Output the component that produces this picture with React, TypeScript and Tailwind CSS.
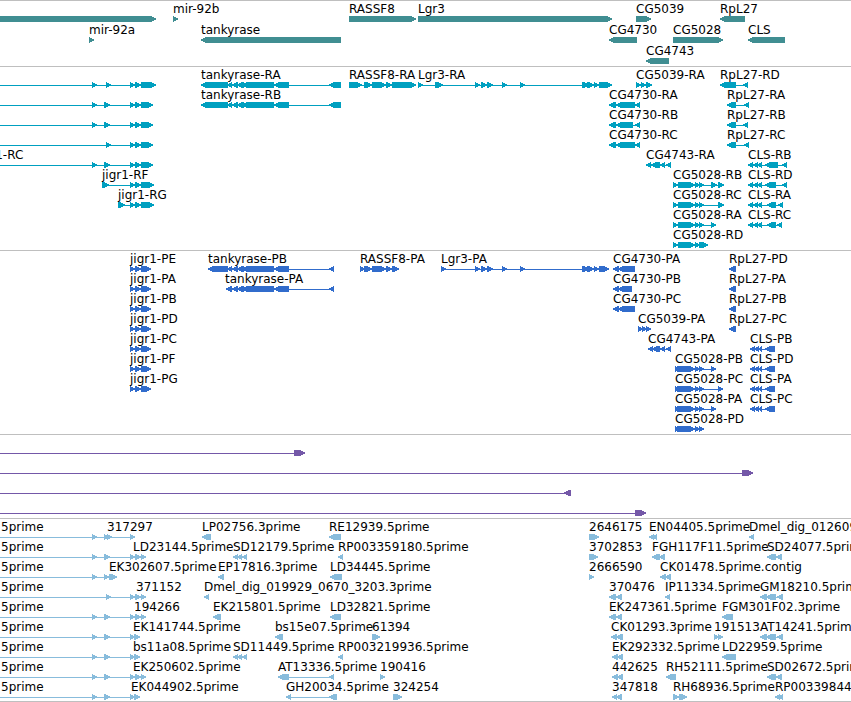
type Strand = "+" | "-";

interface Feature {
  /** Left edge of the label. */
  x: number;
  label?: string;
  strand: Strand;
  /** Blocks as [start, end] pairs, joined by a thin intron line. */
  blocks: number[][];
}

interface TrackData {
  name: string;
  fill: string;
  rowClass: string;
  padClass: string;
  rows: Feature[][];
}

const BAR_TOP = 15;
const BAR_HEIGHT = 6;
const INTRON_Y = 18;
const TIP = 5;

/** Reads "92-97 104-110" into pairs of numbers. */
function parse(spec: string): number[][] {
  return spec.split(" ").map((part) => part.split("-").map(Number));
}

function feat(x: number, label: string, strand: Strand, spec: string): Feature {
  return { x, label, strand, blocks: parse(spec) };
}

/** A feature that begins beyond the left edge of the view. */
function fromLeft(label: string, x: number, strand: Strand, spec: string): Feature {
  return { x, label, strand, blocks: [[0, 0], ...parse(spec)] };
}

const GENES: Feature[][] = [
  [
    feat(0, "", "+", "0-156"),
    feat(173, "mir-92b", "+", "173-178"),
    feat(349, "RASSF8", "+", "349-416"),
    feat(418, "Lgr3", "+", "418-612"),
    feat(636, "CG5039", "+", "636-651"),
    feat(720, "RpL27", "-", "720-745"),
  ],
  [
    feat(89, "mir-92a", "+", "89-94"),
    feat(201, "tankyrase", "-", "201-341"),
    feat(609, "CG4730", "-", "609-637"),
    feat(673, "CG5028", "+", "673-723"),
    feat(748, "CLS", "-", "748-785"),
  ],
  [feat(646, "CG4743", "-", "646-669")],
];

const TANK_R = "201-228 227-232 232-238 237-244 242-274 274-289 329-341";
const JIGR_R = "92-97 104-110 130-135 135-141 141-153";

const TRANSCRIPTS: Feature[][] = [
  [
    fromLeft("", 0, "+", "92-97 106-111 130-135 135-141 141-156"),
    feat(201, "tankyrase-RA", "-", TANK_R),
    feat(349, "RASSF8-RA", "+", "349-362 364-372 372-386 386-392 392-416"),
    feat(418, "Lgr3-RA", "+", "418-423 435-443 475-480 481-487 487-493 502-507 520-525 582-589 587-594 594-599 599-612"),
    feat(636, "CG5039-RA", "+", "636-641 641-646 646-652"),
    feat(720, "RpL27-RD", "-", "720-736 743-748"),
  ],
  [
    fromLeft("", 0, "+", JIGR_R),
    feat(201, "tankyrase-RB", "-", TANK_R),
    feat(609, "CG4730-RA", "-", "609-616 616-635 635-640"),
    feat(727, "RpL27-RA", "-", "727-736 744-749"),
  ],
  [
    fromLeft("", 0, "+", JIGR_R),
    feat(609, "CG4730-RB", "-", "609-616 616-633 635-640"),
    feat(727, "RpL27-RB", "-", "727-736 743-748"),
  ],
  [
    fromLeft("", 0, "+", "106-111 130-135 135-141 141-153"),
    feat(609, "CG4730-RC", "-", "609-616 616-635 635-640"),
    feat(727, "RpL27-RC", "-", "727-736 744-749"),
  ],
  [
    fromLeft("jigr1-RC", -24, "+", JIGR_R),
    feat(646, "CG4743-RA", "-", "646-651 651-660 660-665 666-671"),
    feat(748, "CLS-RB", "-", "748-753 753-758 757-762 765-778 782-787"),
  ],
  [
    feat(102, "jigr1-RF", "+", "102-109 130-135 135-141 141-154"),
    feat(673, "CG5028-RB", "+", "673-678 678-695 695-700 699-704 711-717 718-724"),
    feat(748, "CLS-RD", "-", "748-753 753-758 757-762 765-776 782-787"),
  ],
  [
    feat(118, "jigr1-RG", "+", "118-125 130-135 135-141 141-154"),
    feat(673, "CG5028-RC", "+", "673-678 678-695 695-700 699-704 718-724"),
    feat(748, "CLS-RA", "-", "748-753 753-758 757-762 767-776 778-783"),
  ],
  [
    feat(673, "CG5028-RA", "+", "673-678 678-695 695-700 699-704 711-716"),
    feat(748, "CLS-RC", "-", "748-753 753-758 757-762 767-776 777-782"),
  ],
  [feat(673, "CG5028-RD", "+", "673-678 678-695 695-700 699-708")],
];

const JIGR_P = "130-135 135-141 141-151";
const CLS_P = "750-755 754-759 758-762 765-775";

const PROTEINS: Feature[][] = [
  [
    feat(130, "jigr1-PE", "+", JIGR_P),
    feat(208, "tankyrase-PB", "-", "208-228 227-232 232-238 237-244 242-274 274-289 329-334"),
    feat(360, "RASSF8-PA", "+", "360-365 364-372 372-386 386-392 392-399"),
    feat(441, "Lgr3-PA", "+", "441-446 475-480 481-487 487-493 502-507 520-525 582-589 587-594 594-599 599-609"),
    feat(613, "CG4730-PA", "-", "613-619 618-635"),
    feat(729, "RpL27-PD", "-", "729-736"),
  ],
  [
    feat(130, "jigr1-PA", "+", JIGR_P),
    feat(225, "tankyrase-PA", "-", "226-232 232-238 237-244 242-274 274-289 329-334"),
    feat(613, "CG4730-PB", "-", "613-619 618-632"),
    feat(729, "RpL27-PA", "-", "729-736"),
  ],
  [
    feat(130, "jigr1-PB", "+", JIGR_P),
    feat(613, "CG4730-PC", "-", "613-619 618-635"),
    feat(729, "RpL27-PB", "-", "729-736"),
  ],
  [
    feat(130, "jigr1-PD", "+", JIGR_P),
    feat(638, "CG5039-PA", "+", "638-643 642-647 646-651"),
    feat(729, "RpL27-PC", "-", "729-736"),
  ],
  [
    feat(130, "jigr1-PC", "+", JIGR_P),
    feat(648, "CG4743-PA", "-", "648-653 652-660 660-665 666-671"),
    feat(750, "CLS-PB", "-", CLS_P),
  ],
  [
    feat(130, "jigr1-PF", "+", JIGR_P),
    feat(675, "CG5028-PB", "+", "675-679 677-695 695-700 699-704 711-716"),
    feat(750, "CLS-PD", "-", CLS_P),
  ],
  [
    feat(130, "jigr1-PG", "+", JIGR_P),
    feat(675, "CG5028-PC", "+", "675-679 677-695 695-700 699-704 718-723"),
    feat(750, "CLS-PA", "-", CLS_P),
  ],
  [
    feat(675, "CG5028-PA", "+", "675-679 677-695 695-700 699-704 711-716"),
    feat(750, "CLS-PC", "-", CLS_P),
  ],
  [feat(675, "CG5028-PD", "+", "675-679 677-695 695-700 699-704")],
];

const SPANS: Feature[][] = [
  [fromLeft("", 0, "+", "294-305")],
  [fromLeft("", 0, "+", "742-753")],
  [fromLeft("", 0, "-", "564-571")],
  [fromLeft("", 0, "+", "635-646")],
];

const EST_LONG = "92-97 104-110 130-135 135-141 141-146";
const EST_SHORT = "92-97 104-110 130-135 134-140";

const ESTS: Feature[][] = [
  [
    fromLeft("5prime", 1, "+", "92-97 104-109 107-112 130-135"),
    feat(107, "317297", "+", "130-135"),
    feat(202, "LP02756.3prime", "-", "202-211"),
    feat(329, "RE12939.5prime", "-", "329-341"),
    feat(589, "2646175", "+", "589-599"),
    feat(649, "EN04405.5prime", "-", "649-654 652-657"),
    feat(749, "Dmel_dig_012609", "-", "749-754"),
  ],
  [
    fromLeft("5prime", 1, "+", EST_LONG),
    feat(133, "LD23144.5prime", "+", "141-146"),
    feat(233, "SD12179.5prime", "-", "233-238 237-242 242-247"),
    feat(338, "RP003359180.5prime", "-", "338-343"),
    feat(589, "3702853", "+", "589-598"),
    feat(652, "FGH117F11.5prime", "-", "652-660 659-665"),
    feat(767, "SD24077.5prime", "-", "767-776 776-782"),
  ],
  [
    fromLeft("5prime", 1, "+", "92-97 104-109 109-117"),
    feat(109, "EK302607.5prime", "+", "109-117"),
    feat(218, "EP17816.3prime", "-", "218-224"),
    feat(330, "LD34445.5prime", "-", "330-342"),
    feat(589, "2666590", "+", "589-594"),
    feat(660, "CK01478.5prime.contig", "-", "660-666 665-671"),
  ],
  [
    fromLeft("5prime", 1, "+", "106-111 130-135 135-141 141-146"),
    feat(136, "371152", "+", "141-146"),
    feat(204, "Dmel_dig_019929_0670_3203.3prime", "-", "204-209"),
    feat(609, "370476", "-", "609-616 616-622"),
    feat(665, "IP11334.5prime", "-", "665-670"),
    feat(760, "GM18210.5prime", "-", "760-767 766-776 777-783"),
  ],
  [
    fromLeft("5prime", 1, "+", EST_LONG),
    feat(134, "194266", "+", "141-146"),
    feat(213, "EK215801.5prime", "-", "213-221"),
    feat(330, "LD32821.5prime", "-", "330-341"),
    feat(609, "EK247361.5prime", "-", "609-616 616-622"),
    feat(722, "FGM301F02.3prime", "-", "722-733"),
  ],
  [
    fromLeft("5prime", 1, "+", EST_SHORT),
    feat(133, "EK141744.5prime", "+", "134-140"),
    feat(275, "bs15e07.5prime", "-", "275-283"),
    feat(372, "61394", "+", "372-380"),
    feat(611, "CK01293.3prime", "-", "611-617 616-623"),
    feat(714, "191513", "+", "714-719 718-723"),
    feat(760, "AT14241.5prime", "-", "760-767 766-776 777-783"),
  ],
  [
    fromLeft("5prime", 1, "+", EST_SHORT),
    feat(133, "bs11a08.5prime", "+", "134-140"),
    feat(233, "SD11449.5prime", "-", "233-238 237-242 242-247"),
    feat(338, "RP003219936.5prime", "-", "338-343"),
    feat(612, "EK292332.5prime", "-", "612-618 617-623"),
    feat(722, "LD22959.5prime", "-", "722-736"),
  ],
  [
    fromLeft("5prime", 1, "+", EST_LONG),
    feat(133, "EK250602.5prime", "+", "141-146"),
    feat(278, "AT13336.5prime", "-", "278-289 329-334"),
    feat(380, "190416", "+", "380-385"),
    feat(612, "442625", "-", "612-618 617-623"),
    feat(666, "RH52111.5prime", "-", "666-676"),
    feat(767, "SD02672.5prime", "-", "767-776 776-782"),
  ],
  [
    fromLeft("5prime", 1, "+", EST_SHORT),
    feat(131, "EK044902.5prime", "+", "134-140"),
    feat(286, "GH20034.5prime", "-", "286-291 329-337"),
    feat(393, "324254", "+", "393-402"),
    feat(612, "347818", "-", "612-617 616-622"),
    feat(673, "RH68936.5prime", "+", "673-679 679-687"),
    feat(775, "RP003398440.5prime", "-", "775-780 778-783"),
  ],
];

const TRACKS: TrackData[] = [
  { name: "Genes", fill: "fill-[#408e92]", rowClass: "h-[21px]", padClass: "pb-[2px]", rows: GENES },
  { name: "Transcripts", fill: "fill-[#00a0c0]", rowClass: "h-5", padClass: "pb-[3px]", rows: TRANSCRIPTS },
  { name: "Proteins", fill: "fill-[#316ccc]", rowClass: "h-5", padClass: "pb-[3px]", rows: PROTEINS },
  { name: "Spans", fill: "fill-[#7458a8]", rowClass: "h-5", padClass: "pb-[3px]", rows: SPANS },
  { name: "ESTs", fill: "fill-[#88bcdc]", rowClass: "h-5", padClass: "pb-[2px]", rows: ESTS },
];

/** How far each pixel row of the tip stops short of its point, top to bottom. */
const TIP_STEPS = [4, 2, 0, 0, 2, 4];

/** Stepped outline of one block, pointed at the end that its strand runs to. */
function blockPoints(start: number, end: number, strand: Strand): string {
  const reach = Math.min(TIP, end - start) - 1;
  const point = strand === "+" ? end : start;
  const back = strand === "+" ? start : end;
  const inward = strand === "+" ? -1 : 1;
  const edge = TIP_STEPS.flatMap((step, i) => {
    const x = point + inward * Math.min(step, reach);
    return [`${x},${BAR_TOP + i}`, `${x},${BAR_TOP + i + 1}`];
  });
  return [`${back},${BAR_TOP}`, ...edge, `${back},${BAR_TOP + BAR_HEIGHT}`].join(" ");
}

function Glyph({ feature }: { feature: Feature }) {
  const { blocks, strand } = feature;
  const first = blocks[0][0];
  const last = blocks[blocks.length - 1][1];
  return (
    <g>
      {blocks.length > 1 && <rect x={first} y={INTRON_Y} width={last - first - 1} height={1} />}
      {blocks
        .filter(([start, end]) => end > start)
        .map(([start, end]) => (
          <polygon key={start} points={blockPoints(start, end, strand)} />
        ))}
    </g>
  );
}

function Row({ features, fill, rowClass }: { features: Feature[]; fill: string; rowClass: string }) {
  return (
    <div className={`relative ${rowClass}`}>
      <svg
        className={`block w-full overflow-visible ${rowClass} ${fill}`}
        shapeRendering="crispEdges"
        aria-hidden="true"
      >
        {features.map((feature, i) => (
          <Glyph key={i} feature={feature} />
        ))}
      </svg>
      {features
        .filter((feature) => feature.label)
        .map((feature, i) => (
          <span key={i} className="absolute top-0 whitespace-nowrap" style={{ left: feature.x }}>
            {feature.label}
          </span>
        ))}
    </div>
  );
}

function Track({ track }: { track: TrackData }) {
  return (
    <section aria-label={track.name} className={`border-t border-[#bfbfbf] ${track.padClass}`}>
      {track.rows.map((features, i) => (
        <Row key={i} features={features} fill={track.fill} rowClass={track.rowClass} />
      ))}
    </section>
  );
}

export default function App() {
  return (
    <main className="w-full overflow-hidden border-b border-[#bfbfbf] bg-white font-['DejaVu_Sans',sans-serif] text-[12px] leading-[17px] text-black">
      {TRACKS.map((track) => (
        <Track key={track.name} track={track} />
      ))}
    </main>
  );
}
